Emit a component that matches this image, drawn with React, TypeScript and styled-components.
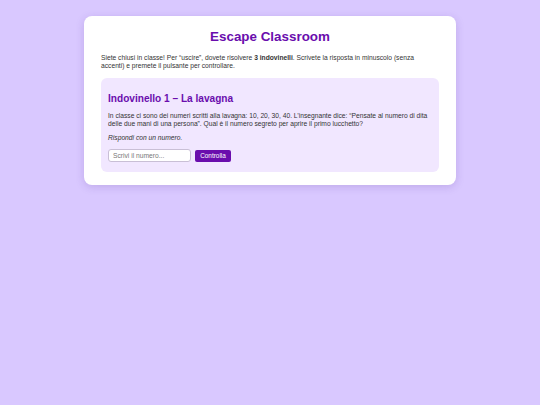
import React from "react";
import styled, { createGlobalStyle } from "styled-components";

const Global = createGlobalStyle`
  html, body { margin: 0; padding: 0; }
  body {
    background: #d9c8ff;
    font-family: "Liberation Sans", Arial, sans-serif;
    font-size: 6.7px;
    color: #333;
    min-height: 405px;
  }
`;

const Page = styled.div`
  display: flex;
  justify-content: center;
  padding-top: 16px;
`;

const Card = styled.main`
  width: 338px;
  background: #ffffff;
  border-radius: 8px;
  padding: 12px 17px 13px;
  box-shadow: 0 2px 8px rgba(80, 40, 140, 0.18);
`;

const Title = styled.h1`
  margin: 0 0 8px;
  text-align: center;
  color: #6a0dad;
  font-size: 13.4px;
  font-weight: bold;
  line-height: 18px;
`;

const Intro = styled.p`
  margin: 0 0 8px;
  line-height: 8px;
`;

const Riddle = styled.section`
  background: #f1e7ff;
  border-radius: 6px;
  padding: 15px 7px 10px;
`;

const RiddleTitle = styled.h2`
  margin: 0 0 7px;
  color: #6a0dad;
  font-size: 10.1px;
  line-height: 12px;
`;

const Text = styled.p<{ $italic?: boolean }>`
  margin: 0 0 6px;
  line-height: 8px;
  font-style: ${(p) => (p.$italic ? "italic" : "normal")};
`;

const Row = styled.div`
  display: flex;
  align-items: center;
  gap: 4px;
  margin-top: 7px;
`;

const Input = styled.input`
  width: 83px;
  height: 13px;
  box-sizing: border-box;
  border: 1px solid #c9bfd6;
  border-radius: 3px;
  padding: 0 4px;
  font-family: "Liberation Sans", Arial, sans-serif;
  font-size: 6.7px;
  background: #fff;
  &::placeholder { color: #777; }
`;

const Button = styled.button`
  height: 12px;
  width: 36px;
  padding: 0;
  border: none;
  border-radius: 2px;
  background: #6a0dad;
  color: #fff;
  font-family: "Liberation Sans", Arial, sans-serif;
  font-size: 6.4px;
`;

export default function App() {
  return (
    <>
      <Global />
      <Page>
        <Card>
          <Title>Escape Classroom</Title>
          <Intro>
            Siete chiusi in classe! Per “uscire”, dovete risolvere <b>3 indovinelli</b>. Scrivete la risposta in minuscolo (senza accenti) e premete il pulsante per controllare.
          </Intro>
          <Riddle>
            <RiddleTitle>Indovinello 1 – La lavagna</RiddleTitle>
            <Text>
              In classe ci sono dei numeri scritti alla lavagna: 10, 20, 30, 40. L’insegnante dice: “Pensate al numero di dita delle due mani di una persona”. Qual è il numero segreto per aprire il primo lucchetto?
            </Text>
            <Text $italic>Rispondi con un numero.</Text>
            <Row>
              <Input placeholder="Scrivi il numero..." />
              <Button>Controlla</Button>
            </Row>
          </Riddle>
        </Card>
      </Page>
    </>
  );
}
